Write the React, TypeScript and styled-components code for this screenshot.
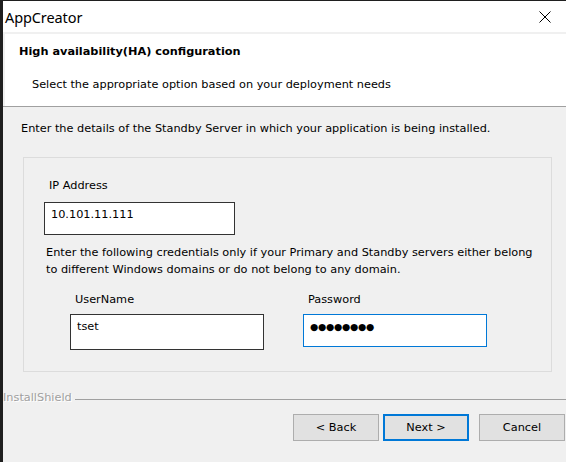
import styled, { createGlobalStyle } from "styled-components";

const GlobalStyle = createGlobalStyle`
  html, body {
    margin: 0;
    padding: 0;
    background: #1f1f1f;
  }
  body {
    font-family: "DejaVu Sans", "Liberation Sans", sans-serif;
    font-size: 11.3px;
  }
  * {
    box-sizing: border-box;
  }
`;

const App = () => {
  return (
    <>
      <GlobalStyle />
      <Screen>
        <Window>
          <TitleBar>
            <Title>AppCreator</Title>
            <CloseButton aria-label="Close">
              <svg width="12" height="12" viewBox="0 0 12 12">
                <path d="M0.5 0.5 L11.5 11.5 M11.5 0.5 L0.5 11.5" stroke="#000" strokeWidth="1" />
              </svg>
            </CloseButton>
          </TitleBar>
          <HeaderArea>
            <Header>
              <HeaderTitle>High availability(HA) configuration</HeaderTitle>
              <HeaderSub>Select the appropriate option based on your deployment needs</HeaderSub>
            </Header>
          </HeaderArea>
          <Body>
            <Intro>Enter the details of the Standby Server in which your application is being installed.</Intro>
            <GroupBox>
              <Label>IP Address</Label>
              <TextBox $width={191} $height={33} $top={8}>10.101.11.111</TextBox>
              <Note>
                Enter the following credentials only if your Primary and Standby servers either belong
                <br />
                to different Windows domains or do not belong to any domain.
              </Note>
              <Credentials>
                <Field>
                  <Label>UserName</Label>
                  <TextBox $width={194} $height={36} $top={6}>tset</TextBox>
                </Field>
                <Field>
                  <Label>Password</Label>
                  <TextBox $width={184} $height={33} $top={6} $focused>
                    <Dots>{"●●●●●●●●"}</Dots>
                  </TextBox>
                </Field>
              </Credentials>
            </GroupBox>
          </Body>
          <Footer>
            <Brand>
              <BrandName>InstallShield</BrandName>
              <BrandLine />
            </Brand>
            <Buttons>
              <Button>&lt; Back</Button>
              <Button $primary>Next &gt;</Button>
              <Button $gap>Cancel</Button>
            </Buttons>
          </Footer>
        </Window>
      </Screen>
    </>
  );
};

const Screen = styled.div`
  width: 566px;
  height: 462px;
  padding: 1px 0 0 3px;
  display: flex;
  overflow: hidden;
`;

const Window = styled.div`
  flex: 1;
  display: flex;
  flex-direction: column;
  background: #f0f0f0;
  color: #000;
`;

const TitleBar = styled.div`
  height: 31px;
  background: #fff;
  display: flex;
  align-items: center;
  justify-content: space-between;
  padding: 0 15px 0 2px;
`;

const Title = styled.span`
  font-family: "Noto Sans", "Open Sans", sans-serif;
  font-size: 14.5px;
  letter-spacing: -0.1px;
`;

const CloseButton = styled.div`
  width: 12px;
  height: 12px;
  display: flex;
  svg {
    display: block;
  }
`;

const HeaderArea = styled.div`
  padding: 2px 0 0 2px;
  border-bottom: 1px solid #a0a0a0;
`;

const Header = styled.div`
  height: 72px;
  background: #fff;
  padding: 10px 0 0 14px;
`;

const HeaderTitle = styled.div`
  font-weight: bold;
  line-height: 16px;
`;

const HeaderSub = styled.div`
  line-height: 16px;
  margin: 17px 0 0 13px;
`;

const Body = styled.div`
  padding: 14px 0 0 18px;
`;

const Intro = styled.div`
  line-height: 16px;
  white-space: nowrap;
`;

const GroupBox = styled.div`
  margin: 20px 0 0 2px;
  width: 529px;
  height: 215px;
  border: 1px solid #dcdcdc;
  padding: 20px 0 0 20px;
`;

const Label = styled.div`
  line-height: 16px;
  padding-left: 5px;
`;

const TextBox = styled.div<{ $width: number; $height: number; $top: number; $focused?: boolean }>`
  width: ${(p) => p.$width}px;
  height: ${(p) => p.$height}px;
  margin-top: ${(p) => p.$top}px;
  background: #fff;
  border: 1px solid ${(p) => (p.$focused ? "#0078d7" : "#333")};
  padding: 4px 0 0 6px;
  line-height: 16px;
`;

const Dots = styled.span`
  font-family: "DejaVu Sans", sans-serif;
  font-size: 9.5px;
  letter-spacing: -0.3px;
`;

const Note = styled.div`
  line-height: 17px;
  margin: 9px 0 0 2px;
  white-space: nowrap;
`;

const Credentials = styled.div`
  display: grid;
  grid-template-columns: 233px 184px;
  margin: 14px 0 0 26px;
`;

const Field = styled.div`
  display: flex;
  flex-direction: column;
`;

const Footer = styled.div`
  margin-top: auto;
  padding-bottom: 21px;
`;

const Brand = styled.div`
  display: flex;
  align-items: center;
  gap: 3px;
`;

const BrandName = styled.span`
  line-height: 16px;
  color: #a0a0a0;
  text-shadow: 1px 1px 0 #fff;
`;

const BrandLine = styled.div`
  flex: 1;
  height: 1px;
  background: #a0a0a0;
  margin-top: 3px;
`;

const Buttons = styled.div`
  display: flex;
  justify-content: flex-end;
  gap: 4px;
  margin-top: 8px;
  padding-right: 1px;
`;

const Button = styled.button<{ $primary?: boolean; $gap?: boolean }>`
  width: 86px;
  height: 27px;
  margin-left: ${(p) => (p.$gap ? "6px" : "0")};
  background: #e1e1e1;
  border: ${(p) => (p.$primary ? "2px solid #0078d7" : "1px solid #adadad")};
  font-family: "DejaVu Sans", "Liberation Sans", sans-serif;
  font-size: 11.3px;
  color: #000;
  padding: 0;
`;

export default App;
